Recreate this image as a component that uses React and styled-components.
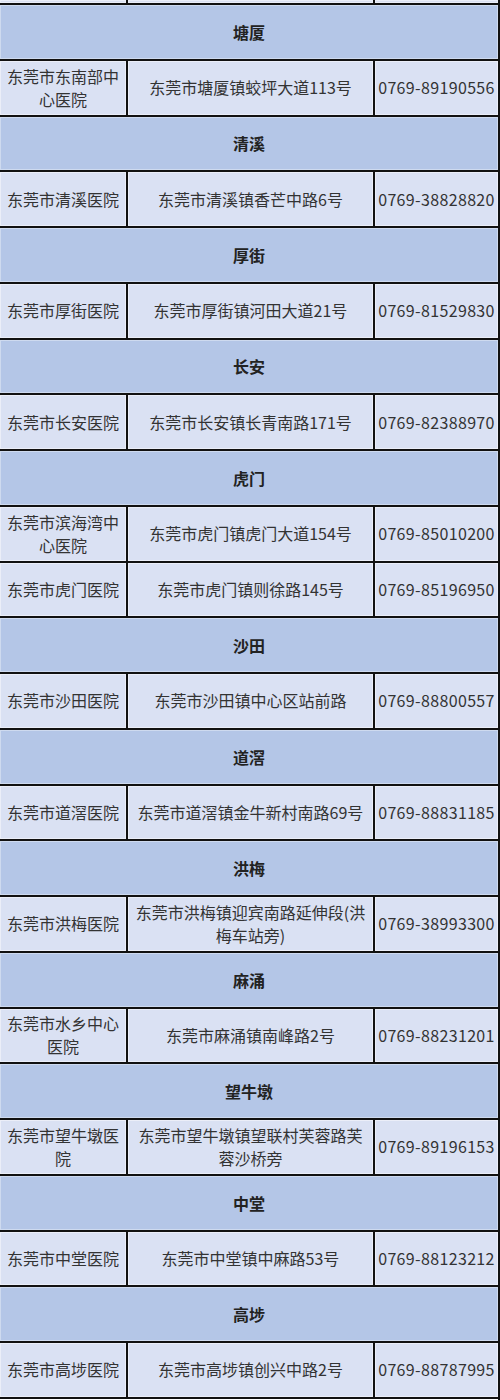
import React from 'react';
import styled, { createGlobalStyle } from 'styled-components';

const GlobalStyle = createGlobalStyle`
  html, body {
    margin: 0;
    padding: 0;
    background: #ffffff;
  }
  body {
    font-family: "Noto Sans CJK SC", "Noto Sans", sans-serif;
  }
`;

const sections = [
  { town: '塘厦', rows: [['东莞市东南部中心医院', '东莞市塘厦镇蛟坪大道113号', '0769-89190556']] },
  { town: '清溪', rows: [['东莞市清溪医院', '东莞市清溪镇香芒中路6号', '0769-38828820']] },
  { town: '厚街', rows: [['东莞市厚街医院', '东莞市厚街镇河田大道21号', '0769-81529830']] },
  { town: '长安', rows: [['东莞市长安医院', '东莞市长安镇长青南路171号', '0769-82388970']] },
  {
    town: '虎门',
    rows: [
      ['东莞市滨海湾中心医院', '东莞市虎门镇虎门大道154号', '0769-85010200'],
      ['东莞市虎门医院', '东莞市虎门镇则徐路145号', '0769-85196950'],
    ],
  },
  { town: '沙田', rows: [['东莞市沙田医院', '东莞市沙田镇中心区站前路', '0769-88800557']] },
  { town: '道滘', rows: [['东莞市道滘医院', '东莞市道滘镇金牛新村南路69号', '0769-88831185']] },
  { town: '洪梅', rows: [['东莞市洪梅医院', '东莞市洪梅镇迎宾南路延伸段(洪梅车站旁)', '0769-38993300']] },
  { town: '麻涌', rows: [['东莞市水乡中心医院', '东莞市麻涌镇南峰路2号', '0769-88231201']] },
  { town: '望牛墩', rows: [['东莞市望牛墩医院', '东莞市望牛墩镇望联村芙蓉路芙蓉沙桥旁', '0769-89196153']] },
  { town: '中堂', rows: [['东莞市中堂医院', '东莞市中堂镇中麻路53号', '0769-88123212']] },
  { town: '高埗', rows: [['东莞市高埗医院', '东莞市高埗镇创兴中路2号', '0769-88787995']] },
];

const Sheet = styled.div`
  width: 498px;
  border-right: 2px solid #111;
  overflow: hidden;
  height: 1400px;
`;

const Row = styled.div`
  display: grid;
  grid-template-columns: 126px 247px 1fr;
  height: ${(p) => p.$h}px;
  border-bottom: 2px solid #111;
  background: #dae1f3;
`;

const Cell = styled.div`
  display: flex;
  align-items: center;
  justify-content: center;
  text-align: center;
  padding: 0 ${(p) => p.$pad || 4}px;
  border-left: ${(p) => (p.$first ? 'none' : '2px solid #111')};
  box-shadow: inset 0 0 0 1px rgba(255, 255, 255, 0.45);
  font-size: 16px;
  line-height: 23px;
  color: #333;
  word-break: break-all;
  overflow: hidden;
`;

const PhoneCell = styled(Cell)`
  white-space: nowrap;
  letter-spacing: 0.35px;
`;

const HeaderRow = styled.div`
  display: flex;
  align-items: center;
  justify-content: center;
  height: 53.75px;
  border-bottom: 2px solid #111;
  background: #b4c6e7;
  box-shadow: inset 0 0 0 1px rgba(255, 255, 255, 0.35);
  font-size: 16px;
  font-weight: bold;
  color: #222;
`;

const DataRow = ({ cells, h = 53.75 }) => (
  <Row $h={h}>
    <Cell $first>{cells[0]}</Cell>
    <Cell $pad={6}>{cells[1]}</Cell>
    <PhoneCell $pad={1}>{cells[2]}</PhoneCell>
  </Row>
);

export default function App() {
  return (
    <>
      <GlobalStyle />
      <Sheet>
        <DataRow cells={['', '', '']} h={3} />
        {sections.map((s) => (
          <React.Fragment key={s.town}>
            <HeaderRow>{s.town}</HeaderRow>
            {s.rows.map((r) => (
              <DataRow key={r[0]} cells={r} />
            ))}
          </React.Fragment>
        ))}
      </Sheet>
    </>
  );
}
